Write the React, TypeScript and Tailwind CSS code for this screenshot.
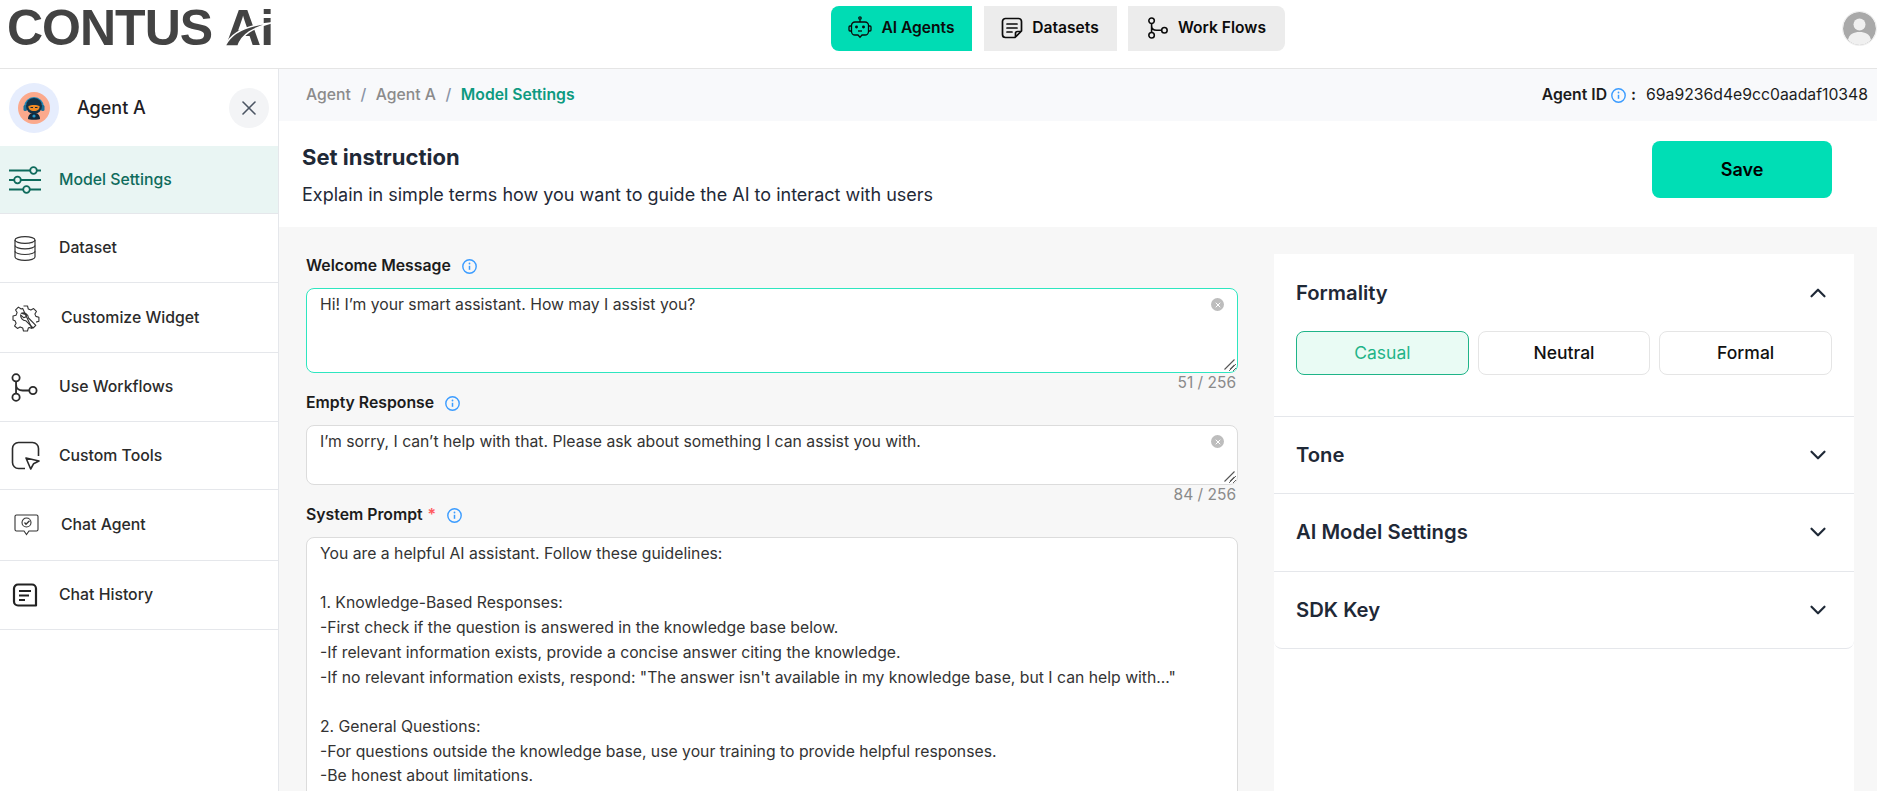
import { ChevronDown, ChevronUp, X } from 'lucide-react';
import type { ReactNode } from 'react';

const SYSTEM_PROMPT = `You are a helpful AI assistant. Follow these guidelines:

1. Knowledge-Based Responses:
-First check if the question is answered in the knowledge base below.
-If relevant information exists, provide a concise answer citing the knowledge.
-If no relevant information exists, respond: "The answer isn't available in my knowledge base, but I can help with..."

2. General Questions:
-For questions outside the knowledge base, use your training to provide helpful responses.
-Be honest about limitations.

3. Formatting:
-Keep answers short and clear.`;

function FlowIcon({ size = 24, stroke = 1.7 }: { size?: number; stroke?: number }) {
  return (
    <svg width={size} height={size} viewBox="0 0 24 24" fill="none" stroke="currentColor" strokeWidth={stroke}>
      <circle cx="5" cy="4" r="3" />
      <circle cx="5" cy="20" r="3" />
      <circle cx="19" cy="14.5" r="3" />
      <path d="M5 7v10M5 9.5c0 3.2 2.5 5 5.5 5H16" />
    </svg>
  );
}

function BotIcon() {
  return (
    <svg width="24" height="24" viewBox="0 0 24 24" fill="none" stroke="currentColor" strokeWidth="1.3">
      <circle cx="12" cy="2" r="1.2" />
      <path d="M12 3.2V6" />
      <path d="M7 6h10a3.5 3.5 0 0 1 3.5 3.5v6A3.5 3.5 0 0 1 17 19h-3l-2 2.2L10 19H7a3.5 3.5 0 0 1-3.5-3.5v-6A3.5 3.5 0 0 1 7 6Z" />
      <path d="M3.5 10H2a1 1 0 0 0-1 1v3a1 1 0 0 0 1 1h1.5M20.5 10H22a1 1 0 0 1 1 1v3a1 1 0 0 1-1 1h-1.5" />
      <path d="M10 15h4" />
      <circle cx="8.5" cy="11" r="0.8" fill="currentColor" />
      <circle cx="15.5" cy="11" r="0.8" fill="currentColor" />
    </svg>
  );
}

function DocIcon() {
  return (
    <svg width="22" height="22" viewBox="0 0 22 22" fill="none" stroke="currentColor" strokeWidth="1.7">
      <path d="M20.5 14V4.5a3 3 0 0 0-3-3h-13a3 3 0 0 0-3 3v13a3 3 0 0 0 3 3H14l6.500-6.500Z" strokeLinejoin="round" />
      <path d="M14.500 20v-3.500a2 2 0 0 1 2-2H20" />
      <path d="M6 7h10M6 11h10M6 15h5" strokeLinecap="round" />
    </svg>
  );
}

function SlidersIcon() {
  return (
    <svg width="32" height="28" viewBox="0 0 32 28" fill="none" stroke="currentColor" strokeWidth="1.8">
      <path d="M0 4.500h21M28 4.500h4M0 14h5M12 14h20M0 23.500h14M21 23.500h11" />
      <circle cx="24.500" cy="4.500" r="3.300" />
      <circle cx="8.500" cy="14" r="3.300" />
      <circle cx="17.500" cy="23.500" r="3.300" />
    </svg>
  );
}

function DatabaseIcon() {
  return (
    <svg width="22" height="25" viewBox="0 0 22 25" fill="none" stroke="#333" strokeWidth="1.2">
      <ellipse cx="11" cy="4" rx="10" ry="3.300" />
      <path d="M1 4v17c0 1.800 4.500 3.300 10 3.300s10-1.500 10-3.300V4" />
      <path d="M1 9.500c0 1.800 4.500 3.300 10 3.300s10-1.500 10-3.300M1 15.200c0 1.800 4.500 3.300 10 3.300s10-1.500 10-3.300" />
      <path d="M15.500 8.500h.1M18.500 8h.1M15.500 14.200h.1M18.500 13.700h.1M15.500 20h.1M18.500 19.500h.1" strokeWidth="1.500" />
    </svg>
  );
}

function WidgetIcon() {
  return (
    <svg width="28" height="28" viewBox="0 0 28 28" fill="none" stroke="#333" strokeWidth="1.1" strokeLinejoin="round">
      <path d="M11.500 2h4l.8 3 2.600 1.100 2.700-1.500 2.800 2.800-1.500 2.700 1 2.300 3 .9v4l-2.800.8M20 24.500l-2.700-.9-1 .5-.8 2.900h-4l-.8-3-2.600-1.100-2.700 1.500L2.600 22l1.500-2.700L3 16.800l-2-.8v-4l3-.8 1.100-2.600-1.500-2.700 2.800-2.800L9.200 5l1.500-.6Z" />
      <path d="M9.200 9.300a5.400 5.400 0 0 1 7.300 4.700l7.300 7.300-2.700 2.700-7.400-7.300a5.400 5.400 0 0 1-5.100-5.900l3 2.800 2.200-.6.600-2.200Z" />
    </svg>
  );
}

function ToolsIcon() {
  return (
    <svg width="29" height="29" viewBox="0 0 29 29" fill="none" stroke="#2b2b2b" strokeWidth="1.600" strokeLinejoin="round">
      <path d="M14 27.500H7.500a6 6 0 0 1-6-6v-14a6 6 0 0 1 6-6h14a6 6 0 0 1 6 6V15" />
      <path d="M15 17l13 3-5.500 2.800-2.800 5.200Z" />
    </svg>
  );
}

function ChatAgentIcon() {
  return (
    <svg width="25" height="22" viewBox="0 0 25 22" fill="none" stroke="#333" strokeWidth="1.100">
      <path d="M2.500 1h20a1.500 1.500 0 0 1 1.500 1.500v13a1.500 1.500 0 0 1-1.500 1.500H15l-2.500 3.500L10 17H2.500A1.500 1.500 0 0 1 1 15.500v-13A1.500 1.500 0 0 1 2.500 1Z" />
      <circle cx="12.500" cy="8.500" r="4.500" />
      <path d="M10.500 8.500l1.500 1.700 3.500-3.500" strokeWidth="1.300" />
    </svg>
  );
}

function HistoryIcon() {
  return (
    <svg width="26" height="25" viewBox="0 0 26 25" fill="none" stroke="#222" strokeWidth="2.200">
      <path d="M24 22.500V5.500a4 4 0 0 0-4-4H6a4 4 0 0 0-4 4v13a4 4 0 0 0 4 4h18Z" strokeLinejoin="round" />
      <path d="M7 8h12M7 12.500h10M7 17h6" />
    </svg>
  );
}

function InfoIcon() {
  return (
    <svg width="15" height="15" viewBox="0 0 15 15" fill="none" stroke="#3b9cff" strokeWidth="1.400">
      <circle cx="7.500" cy="7.500" r="6.700" />
      <path d="M7.500 6.800v4" strokeWidth="1.500" />
      <circle cx="7.500" cy="4.500" r="0.900" fill="#3b9cff" stroke="none" />
    </svg>
  );
}

function RobotAvatar() {
  return (
    <div className="flex h-[50px] w-[50px] items-center justify-center rounded-full bg-[#e6edfd]">
      <div className="flex h-[32px] w-[32px] items-center justify-center rounded-full bg-[#fba98c]">
        <svg width="24" height="26" viewBox="0 0 24 26">
          <path d="M3 12a9 9 0 0 1 18 0" fill="none" stroke="#1e88b8" strokeWidth="2" />
          <rect x="1.500" y="10" width="3.500" height="6" rx="1.500" fill="#1b6f96" />
          <rect x="19" y="10" width="3.500" height="6" rx="1.500" fill="#1b6f96" />
          <circle cx="12" cy="11" r="8" fill="#123247" />
          <path d="M6.500 11c2-1.500 9-1.500 11 0 .5 3-2 5-5.500 5s-6-2-5.500-5Z" fill="#f08a24" />
          <path d="M8.500 12.500h2.500M13 12.500h2.500" stroke="#13293a" strokeWidth="1.200" />
          <path d="M6 24c0-4 2.500-6 6-6s6 2 6 6c0 1-12 1-12 0Z" fill="#11293b" />
          <circle cx="12" cy="21" r="1.600" fill="#2596c9" />
        </svg>
      </div>
    </div>
  );
}

function Logo() {
  return (
    <div className="flex -translate-y-[6px] items-center pl-[7px] font-['Liberation_Sans',sans-serif] text-[#434343]">
      <span className="text-[50px] leading-none font-bold tracking-[-1px]">CONTUS</span>
      <span className="relative ml-[13px] text-[50px] leading-none font-bold tracking-[-1px]">
        Ai
        <svg className="absolute left-0 top-[19px]" width="46" height="24" viewBox="0 0 46 24">
          <path d="M0 24C6 11 22 3 46 1 28 6 17 12 13 24Z" fill="#434343" stroke="#fff" strokeWidth="1.500" />
        </svg>
      </span>
    </div>
  );
}

const navItems = [
  { label: 'AI Agents', icon: <BotIcon />, cls: 'w-[141px] rounded-l-lg bg-[#00dcb4]' },
  { label: 'Datasets', icon: <DocIcon />, cls: 'w-[133px] bg-[#ececec]' },
  { label: 'Work Flows', icon: <FlowIcon size={22} />, cls: 'w-[157px] rounded-r-lg bg-[#ececec]' },
];

const menu: { label: string; icon: ReactNode; cls: string; iconBox: string }[] = [
  { label: 'Model Settings', icon: <SlidersIcon />, cls: 'h-[68px] bg-[#e9f5f3] text-[#0e6b5c]', iconBox: 'w-[50px]' },
  { label: 'Dataset', icon: <DatabaseIcon />, cls: 'h-[69px] text-[#2b2b2b]', iconBox: 'w-[50px] pl-[5px]' },
  { label: 'Customize Widget', icon: <WidgetIcon />, cls: 'h-[70px] text-[#2b2b2b]', iconBox: 'w-[52px] pl-[3px]' },
  { label: 'Use Workflows', icon: <FlowIcon size={29} stroke={1.5} />, cls: 'h-[69px] text-[#2b2b2b]', iconBox: 'w-[50px] pl-[1px]' },
  { label: 'Custom Tools', icon: <ToolsIcon />, cls: 'h-[68px] text-[#2b2b2b]', iconBox: 'w-[50px] pl-[2px]' },
  { label: 'Chat Agent', icon: <ChatAgentIcon />, cls: 'h-[71px] text-[#2b2b2b]', iconBox: 'w-[52px] pl-[5px]' },
  { label: 'Chat History', icon: <HistoryIcon />, cls: 'h-[69px] text-[#2b2b2b]', iconBox: 'w-[50px] pl-[3px]' },
];

function Field({
  label,
  required,
  value,
  textareaCls,
  count,
  focused,
}: {
  label: string;
  required?: boolean;
  value: string;
  textareaCls: string;
  count?: string;
  focused?: boolean;
}) {
  return (
    <div className="flex flex-col">
      <div className="flex h-[22px] items-center text-[15.800px] font-semibold text-[#1c1c1c]">
        <span>{label}</span>
        {required && <span className="ml-[5px] text-[#ff5a5f]">*</span>}
        <span className="ml-[11px] flex"><InfoIcon /></span>
      </div>
      <div className="relative mt-[11px]">
        <textarea
          readOnly
          defaultValue={value}
          className={`block w-full resize-y rounded-lg border bg-white pt-[4px] pr-[40px] pl-[13px] text-[15.750px] leading-[24.700px] text-[#333] outline-none ${focused ? 'border-[#2ee6c0]' : 'border-[#dcdcdc]'} ${textareaCls}`}
        />
        {count && (
          <>
            <span className="absolute right-[14px] top-[10px] flex h-[13px] w-[13px] items-center justify-center rounded-full bg-[#bdbdbd] text-white">
              <X size={8} strokeWidth={3} />
            </span>
            <svg className="pointer-events-none absolute right-[3px] bottom-[3px]" width="11" height="11" viewBox="0 0 11 11" stroke="#555" strokeWidth="1.100">
              <path d="M0.500 10.500L10.500 0.500M6 10.500L10.500 6" />
            </svg>
          </>
        )}
      </div>
      {count && <div className="h-[19px] pr-[2px] text-right text-[15.500px] leading-[20px] text-[#8a8a8a]">{count}</div>}
    </div>
  );
}

function Accordion({ title, open, cls }: { title: string; open?: boolean; cls: string }) {
  return (
    <div className={`border-b border-[#e5e7eb] px-[22px] ${cls}`}>
      <div className="flex h-[26px] items-center justify-between">
        <span className="text-[20.250px] leading-[26px] font-semibold text-[#1f2937]">{title}</span>
        {open ? <ChevronUp size={26} strokeWidth={2} className="mr-[1px] text-[#1f2937]" /> : <ChevronDown size={26} strokeWidth={2} className="mr-[1px] text-[#1f2937]" />}
      </div>
      {open && (
        <div className="mt-[25px] grid grid-cols-3 gap-[9px]">
          <button className="h-[44px] rounded-lg border border-[#1fb488] bg-[#e9fbf4] text-[17.500px] text-[#1fb488]">Casual</button>
          <button className="h-[44px] rounded-lg border border-[#e5e5e5] bg-white text-[17.500px] font-medium text-[#111]">Neutral</button>
          <button className="h-[44px] rounded-lg border border-[#e5e5e5] bg-white text-[17.500px] font-medium text-[#111]">Formal</button>
        </div>
      )}
    </div>
  );
}

export default function App() {
  return (
    <div className="flex h-screen flex-col overflow-hidden bg-white font-['Inter',sans-serif]">
      {/* Top bar */}
      <header className="flex h-[69px] shrink-0 items-center border-b border-[#e5e5e5] bg-white">
        <div className="w-[831px] shrink-0">
          <Logo />
        </div>
        <nav className="flex h-[45px] -translate-y-[6px] gap-[11.500px]">
          {navItems.map((n) => (
            <button key={n.label} className={`flex items-center justify-center gap-[9px] text-[15.600px] font-semibold text-[#0b0b0b] ${n.cls}`}>
              {n.icon}
              {n.label}
            </button>
          ))}
        </nav>
        <div className="ml-auto flex h-[35px] w-[35px] -translate-y-[6px] items-center justify-center overflow-hidden rounded-full border border-[#eeeeee]">
          <svg width="33" height="33" viewBox="0 0 33 33">
            <circle cx="16.500" cy="16.500" r="16.500" fill="#a9a9a9" />
            <circle cx="16.500" cy="12.500" r="6" fill="#f0f0f0" />
            <path d="M5 28c1-6 6-8 11.500-8S27 22 28 28c-3 3-7 5-11.500 5S8 31 5 28Z" fill="#f0f0f0" />
          </svg>
        </div>
      </header>

      <div className="flex min-h-0 flex-1">
        {/* Sidebar */}
        <aside className="w-[279px] shrink-0 border-r border-[#e5e7eb] bg-white">
          <div className="flex h-[77px] items-center pr-[9px] pl-[9px]">
            <RobotAvatar />
            <span className="ml-[18px] text-[18px] font-medium text-[#1f2024]">Agent A</span>
            <button className="ml-auto flex h-[40px] w-[40px] items-center justify-center rounded-full bg-[#f3f4f6] text-[#4b5563]">
              <X size={24} strokeWidth={1.6} />
            </button>
          </div>
          {menu.map((m) => (
            <div key={m.label} className={`flex items-center border-b border-[#e5e7eb] pl-[9px] text-[15.800px] font-medium ${m.cls}`}>
              <span className={`flex shrink-0 items-center ${m.iconBox}`}>{m.icon}</span>
              <span>{m.label}</span>
            </div>
          ))}
        </aside>

        <main className="flex min-w-0 flex-1 flex-col">
          {/* Breadcrumb */}
          <div className="flex h-[52px] shrink-0 items-center justify-between bg-[#f8f9fb] pr-[9px] pl-[27px] text-[15.750px]">
            <div className="flex items-center gap-[9.500px] font-medium">
              <span className="text-[#8b8b8b]">Agent</span>
              <span className="text-[#8a94a6]">/</span>
              <span className="text-[#8b8b8b]">Agent A</span>
              <span className="text-[#8a94a6]">/</span>
              <span className="font-semibold text-[#0d9a80]">Model Settings</span>
            </div>
            <div className="flex items-center text-[#1c1c1c]">
              <span className="font-semibold">Agent ID</span>
              <span className="ml-[4px] flex"><InfoIcon /></span>
              <span className="ml-[5px] font-semibold">:</span>
              <span className="ml-[10px]">69a9236d4e9cc0aadaf10348</span>
            </div>
          </div>

          {/* Title */}
          <div className="flex h-[106px] shrink-0 items-center justify-between bg-white pr-[45px] pl-[23px]">
            <div className="mt-[2px]">
              <h1 className="text-[22px] leading-[28px] font-bold text-[#1f2937]">Set instruction</h1>
              <p className="mt-[12px] text-[18px] leading-[24px] text-[#1f2937]">Explain in simple terms how you want to guide the AI to interact with users</p>
            </div>
            <button className="-mt-[10px] h-[57px] w-[180px] rounded-lg bg-[#00deb5] text-[18px] font-semibold text-black">Save</button>
          </div>

          {/* Form + settings */}
          <div className="flex min-h-0 flex-1 gap-[36px] bg-[#f7f7f7] pr-[23px] pl-[27px]">
            <div className="flex w-[932px] shrink-0 flex-col pt-[28px]">
              <Field label="Welcome Message" value="Hi! I’m your smart assistant. How may I assist you?" textareaCls="h-[85px]" count="51 / 256" focused />
              <Field label="Empty Response" value="I’m sorry, I can’t help with that. Please ask about something I can assist you with." textareaCls="h-[60px]" count="84 / 256" />
              <Field label="System Prompt" required value={SYSTEM_PROMPT} textareaCls="h-[420px]" />
            </div>

            <div className="mt-[27px] flex-1 bg-white">
              <Accordion title="Formality" open cls="h-[163px] pt-[26px]" />
              <Accordion title="Tone" cls="h-[77px] pt-[25px]" />
              <Accordion title="AI Model Settings" cls="h-[78px] pt-[25px]" />
              <Accordion title="SDK Key" cls="h-[77px] rounded-b-lg pt-[25px]" />
            </div>
          </div>
        </main>
      </div>
    </div>
  );
}
